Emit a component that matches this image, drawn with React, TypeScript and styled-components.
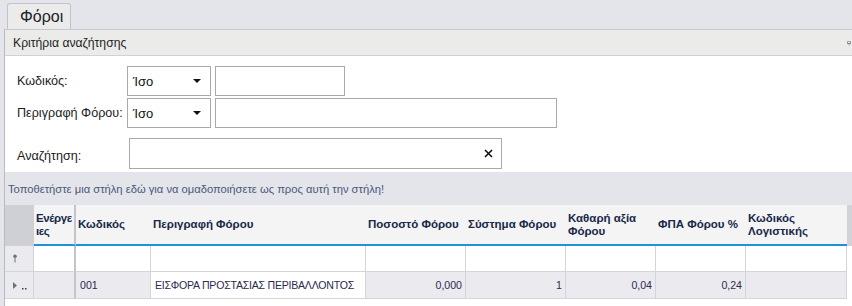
import * as React from 'react';
import styled, { createGlobalStyle } from 'styled-components';

const GlobalStyle = createGlobalStyle`
    html, body {
        margin: 0;
        padding: 0;
        background: #e4e5ea;
    }
    body {
        font-family: "Liberation Sans", Arial, sans-serif;
        overflow: hidden;
    }
`;

type Column = {
    key: string;
    title: string;
    width: number;
    align?: 'left' | 'right';
    breakAll?: boolean;
};

const columns: Column[] = [
    { key: 'actions', title: 'Ενέργειες', width: 42, breakAll: true },
    { key: 'code', title: 'Κωδικός', width: 75 },
    { key: 'descr', title: 'Περιγραφή Φόρου', width: 215 },
    { key: 'rate', title: 'Ποσοστό Φόρου', width: 100, align: 'right' },
    { key: 'system', title: 'Σύστημα Φόρου', width: 100, align: 'right' },
    { key: 'net', title: 'Καθαρή αξία Φόρου', width: 90, align: 'right' },
    { key: 'vat', title: 'ΦΠΑ Φόρου %', width: 90, align: 'right' },
    { key: 'account', title: 'Κωδικός Λογιστικής', width: 101 },
];

const row: Record<string, string> = {
    actions: '',
    code: '001',
    descr: 'ΕΙΣΦΟΡΑ ΠΡΟΣΤΑΣΙΑΣ ΠΕΡΙΒΑΛΛΟΝΤΟΣ',
    rate: '0,000',
    system: '1',
    net: '0,04',
    vat: '0,24',
    account: '',
};

const gridTemplate = `29px ${columns.map((c) => `${c.width}px`).join(' ')} 5px`;

export default function App(): React.ReactNode {
    return (
        <Page>
            <GlobalStyle />
            <TabStrip>
                <Tab>Φόροι</Tab>
            </TabStrip>
            <Panel>
                <PanelHeader>
                    <span>Κριτήρια αναζήτησης</span>
                    <PinCorner>
                        <svg width="10" height="10" viewBox="0 0 10 10">
                            <path d="M1 2h6v4H1z M0 6h8 M4 6v4" fill="none" stroke="#7d7f86" strokeWidth="1.4" />
                        </svg>
                    </PinCorner>
                </PanelHeader>
                <Form>
                    <FieldRow>
                        <Label>Κωδικός:</Label>
                        <Select>
                            <span>Ίσο</span>
                            <Caret />
                        </Select>
                        <TextBox $width={130} />
                    </FieldRow>
                    <FieldRow>
                        <Label>Περιγραφή Φόρου:</Label>
                        <Select>
                            <span>Ίσο</span>
                            <Caret />
                        </Select>
                        <TextBox $width={342} />
                    </FieldRow>
                    <SearchRow>
                        <Label>Αναζήτηση:</Label>
                        <SearchBox>
                            <svg width="9" height="9" viewBox="0 0 9 9">
                                <path d="M1 1L8 8M8 1L1 8" stroke="#111" strokeWidth="1.6" />
                            </svg>
                        </SearchBox>
                    </SearchRow>
                </Form>
                <GroupPanel>Τοποθετήστε μια στήλη εδώ για να ομαδοποιήσετε ως προς αυτή την στήλη!</GroupPanel>
                <Grid>
                    <HeaderRow>
                        <IndicatorHead />
                        {columns.map((c, i) => (
                            <HeaderCell key={c.key} $breakAll={c.breakAll} $fixed={i === 0}>
                                {c.title}
                            </HeaderCell>
                        ))}
                        <ScrollCorner />
                    </HeaderRow>
                    <DataRow $filter>
                        <Indicator>
                            <svg width="6" height="9" viewBox="0 0 6 9">
                                <circle cx="3" cy="2.3" r="1.8" fill="#6e7280" />
                                <path d="M3 4v4.5" stroke="#6e7280" strokeWidth="1" />
                            </svg>
                        </Indicator>
                        {columns.map((c, i) => (
                            <Cell key={c.key} $filter $fixed={i === 0} />
                        ))}
                        <Tail />
                    </DataRow>
                    <DataRow>
                        <Indicator>
                            <svg width="16" height="9" viewBox="0 0 16 9">
                                <path d="M1 1l4 3.5L1 8z" fill="#6e7280" />
                                <rect x="10" y="7" width="1.5" height="1.5" fill="#3c3f4a" />
                                <rect x="13" y="7" width="1.5" height="1.5" fill="#3c3f4a" />
                            </svg>
                        </Indicator>
                        {columns.map((c, i) => (
                            <Cell key={c.key} $align={c.align} $fixed={i === 0} $focused={c.key === 'descr'}>
                                {row[c.key]}
                            </Cell>
                        ))}
                        <Tail />
                    </DataRow>
                </Grid>
            </Panel>
        </Page>
    );
}

const Page = styled.div`
    width: 852px;
    height: 306px;
    overflow: hidden;
    display: flex;
    flex-direction: column;
`;

const TabStrip = styled.div`
    display: flex;
    padding: 3px 0 0 7px;
    height: 26px;
`;

const Tab = styled.div`
    width: 64px;
    box-sizing: border-box;
    border: 1px solid #c3c4ca;
    border-bottom: none;
    border-radius: 3px 3px 0 0;
    background: #ebebec;
    color: #222;
    font-size: 16px;
    display: flex;
    align-items: center;
    padding-left: 12px;
`;

const Panel = styled.div`
    flex: 1;
    margin-left: 4px;
    border-left: 1px solid #b9bbc2;
    border-top: 1px solid #c8c9ce;
    background: #fff;
    display: flex;
    flex-direction: column;
`;

const PanelHeader = styled.div`
    height: 25px;
    background: #ebebe9;
    border-bottom: 1px solid #d2d2d4;
    display: flex;
    align-items: center;
    justify-content: space-between;
    padding-left: 8px;
    font-size: 12.2px;
    color: #1e1e1e;
    overflow: hidden;
`;

const PinCorner = styled.div`
    width: 5px;
    overflow: hidden;
    display: flex;
    align-items: center;
`;

const Form = styled.div`
    height: 116px;
    box-sizing: border-box;
    padding: 10px 0 0 12px;
    display: flex;
    flex-direction: column;
    gap: 2px;
`;

const FieldRow = styled.div`
    display: flex;
    align-items: center;
    height: 30px;
`;

const SearchRow = styled(FieldRow)`
    margin-top: 8px;
    & > span {
        padding-top: 5px;
    }
`;

const Label = styled.span`
    width: 110px;
    font-size: 12.6px;
    color: #1b1b1b;
`;

const Select = styled.div`
    width: 84px;
    height: 30px;
    box-sizing: border-box;
    border: 1px solid #a9a9a9;
    display: flex;
    align-items: center;
    justify-content: space-between;
    padding: 0 9px 0 5px;
    font-size: 13px;
    color: #111;
    margin-right: 4px;
`;

const Caret = styled.span`
    width: 0;
    height: 0;
    border-left: 4px solid transparent;
    border-right: 4px solid transparent;
    border-top: 4px solid #111;
`;

const TextBox = styled.div<{ $width: number }>`
    width: ${(p) => p.$width}px;
    height: 30px;
    box-sizing: border-box;
    border: 1px solid #a9a9a9;
`;

const SearchBox = styled.div`
    width: 373px;
    height: 31px;
    margin-left: 2px;
    box-sizing: border-box;
    border: 1px solid #a9a9a9;
    display: flex;
    align-items: center;
    justify-content: flex-end;
    padding-right: 8px;
`;

const GroupPanel = styled.div`
    height: 33px;
    background: #e4e5ea;
    display: flex;
    align-items: center;
    padding-left: 3px;
    font-size: 11.2px;
    color: #4b5878;
`;

const Grid = styled.div`
    display: flex;
    flex-direction: column;
    font-size: 10.6px;
`;

const HeaderRow = styled.div`
    display: grid;
    grid-template-columns: ${gridTemplate};
    height: 41px;
    background: #f4f4f5;
`;

const IndicatorHead = styled.div`
    background: #cfd0d6;
`;

const HeaderCell = styled.div<{ $breakAll?: boolean; $fixed?: boolean }>`
    display: flex;
    align-items: center;
    padding: 0 1px 0 2px;
    font-size: 11.5px;
    font-weight: bold;
    color: #172848;
    line-height: 13px;
    border-bottom: 2px solid #1f93d9;
    border-right: ${(p) => (p.$fixed ? '2px solid #c4c5cc' : 'none')};
    word-break: ${(p) => (p.$breakAll ? 'break-all' : 'normal')};
    letter-spacing: ${(p) => (p.$breakAll ? '-0.4px' : '0')};
    box-sizing: border-box;
`;

const ScrollCorner = styled.div`
    background: #d2d3d9;
`;

const DataRow = styled.div<{ $filter?: boolean }>`
    display: grid;
    grid-template-columns: ${gridTemplate};
    height: ${(p) => (p.$filter ? 26 : 27)}px;
`;

const Indicator = styled.div`
    background: #ebebef;
    border-bottom: 1px solid #d4d5dc;
    border-right: 1px solid #d4d5dc;
    display: flex;
    align-items: center;
    padding-left: 7px;
    box-sizing: border-box;
`;

const Cell = styled.div<{
    $align?: 'left' | 'right';
    $fixed?: boolean;
    $filter?: boolean;
    $focused?: boolean;
}>`
    display: flex;
    align-items: center;
    justify-content: ${(p) => (p.$align === 'right' ? 'flex-end' : 'flex-start')};
    padding: 0 3px 0 4px;
    box-sizing: border-box;
    background: ${(p) => (p.$filter || p.$focused ? '#fff' : '#ebebef')};
    border-bottom: 1px solid #d4d5dc;
    border-right: ${(p) => (p.$fixed ? '2px solid #c4c5cc' : '1px solid #d4d5dc')};
    color: #2b2a4f;
    white-space: nowrap;
    overflow: hidden;
    letter-spacing: ${(p) => (p.$focused ? '-0.25px' : '0')};
`;

const Tail = styled.div`
    background: #fff;
`;
